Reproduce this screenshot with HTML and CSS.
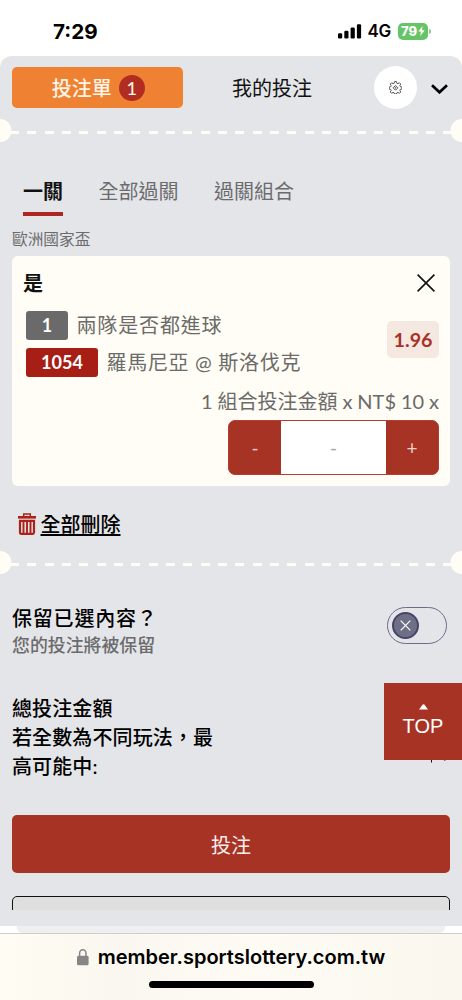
FILE: index.html
```html
<!DOCTYPE html>
<html lang="zh-Hant">
<head>
<meta charset="utf-8">
<meta name="viewport" content="width=device-width, initial-scale=1">
<title>投注單</title>
<link rel="stylesheet" href="styles.css">
</head>
<body>
<header class="status">
  <span class="clock">7:29</span>
  <div class="status-right">
    <svg class="signal" width="24" height="15" viewBox="0 0 24 15"><rect x="0" y="9.3" width="4.2" height="5.2" rx="1.2"/><rect x="6.3" y="6.8" width="4.2" height="7.7" rx="1.2"/><rect x="12.6" y="3.5" width="4.2" height="11" rx="1.2"/><rect x="18.9" y="0.3" width="4.2" height="14.2" rx="1.2"/></svg>
    <span class="network">4G</span>
    <div class="battery"><span>79</span><svg width="7" height="10" viewBox="0 0 7 10"><path d="M4.6 0 0.3 5.5h2.6L2.3 10 6.7 4.3H4z" fill="#fff"/></svg></div>
    <i class="battery-cap"></i>
  </div>
</header>
<div class="backdrop">
<main class="sheet">
  <nav class="top-nav">
    <button class="slip-tab">投注單<span class="count">1</span></button>
    <span class="my-bets">我的投注</span>
    <button class="gear"><svg width="13" height="13" viewBox="0 0 24 24" fill="none" stroke="#333" stroke-width="1.5" stroke-linejoin="round"><path d="M10.300 1h3.400l.8 3.200 2 .8 2.800-1.700 2.400 2.400L20 8.500l.8 2 3.200.8v3.400l-3.200.8-.8 2 1.700 2.800-2.400 2.400L16.500 21l-2 .8-.8 2.200h-3.400l-.8-2.200-2-.8-2.800 1.700-2.400-2.400L4 17.500l-.8-2L0 14.700v-3.400l3.200-.8.8-2-1.700-2.800 2.400-2.400L7.500 5l2-.8z"/><path d="M12 8.300 16.500 12.500 12 17 7.500 12.500z"/><circle cx="12" cy="12.600" r=".8"/></svg></button>
    <svg class="chevron" width="17" height="10" viewBox="0 0 17 10"><path d="M1 1.300 8.500 8.300 16 1.300" fill="none" stroke="#000" stroke-width="2.700"/></svg>
  </nav>
  <div class="perforation"></div>
  <nav class="modes">
    <span class="mode active">一關</span>
    <span class="mode">全部過關</span>
    <span class="mode">過關組合</span>
  </nav>
  <p class="league">歐洲國家盃</p>
  <section class="card">
    <div class="card-head">
      <strong>是</strong>
      <svg width="18" height="18" viewBox="0 0 18 18"><path d="M.6.6 17.400 17.400M17.400.6.6 17.400" stroke="#111" stroke-width="1.600"/></svg>
    </div>
    <div class="pick">
      <div class="pick-info">
        <div class="row"><span class="tag grey">1</span><span>兩隊是否都進球</span></div>
        <div class="row"><span class="tag red">1054</span><span class="match">羅馬尼亞 @ 斯洛伐克</span></div>
      </div>
      <span class="odds">1.96</span>
    </div>
    <p class="stake">1 組合投注金額 x NT$ 10 x</p>
    <div class="stepper"><button>-</button><span class="amount">-</span><button>+</button></div>
  </section>
  <div class="delete">
    <svg width="18" height="22" viewBox="0 0 18 22"><g fill="none" stroke="#ae2118"><path d="M5.700 3.500V.9h6.600v2.600" stroke-width="1.500"/><path d="M0 4.300h18" stroke-width="2.600"/><path d="M2 7.800h14v11.700q0 1.300-1.300 1.300H3.300Q2 20.800 2 19.500z" stroke-width="2.200"/><path d="M5.500 8v12M9 8v12M12.500 8v12" stroke-width="1.900"/></g></svg>
    <a>全部刪除</a>
  </div>
  <div class="perforation"></div>
  <section class="keep">
    <div><h2>保留已選內容？</h2><p>您的投注將被保留</p></div>
    <div class="switch"><span class="knob"><svg width="11" height="11" viewBox="0 0 11 11"><path d="M.7.7 10.300 10.300M10.300.7.7 10.300" stroke="#fff" stroke-width="1.200"/></svg></span></div>
  </section>
  <section class="totals">
    <p>總投注金額</p>
    <div class="win"><p>若全數為不同玩法，最高可能中:</p><svg class="value-edge" width="20" height="3" viewBox="0 0 20 3"><path d="M1 0h1v2.500H1z" fill="#111"/><path d="M14 0h1.500v1H14z" fill="#111" opacity=".5"/></svg></div>
  </section>
  <button class="submit">投注</button>
  <div class="next-clip"><div class="next-button"></div></div>
</main>
</div>
<div class="tail"><div class="tail-bar"></div></div>
<footer class="browser-bar">
  <div class="address"><svg width="12" height="17" viewBox="0 0 12 17"><rect x="0" y="6.800" width="11.600" height="9.500" rx="1.500" fill="#868686"/><path d="M2.600 7.500V4.300a3.200 3.500 0 0 1 6.400 0v3.200" fill="none" stroke="#868686" stroke-width="1.500"/></svg><span>member.sportslottery.com.tw</span></div>
  <div class="home"></div>
</footer>
<a class="to-top"><svg width="9" height="6" viewBox="0 0 9 6"><path d="M0 5.500 3.700.6q.8-.9 1.600 0L9 5.500z" fill="#fff"/></svg><span>TOP</span></a>
</body>
</html>
```
FILE: styles.css
```css
* { box-sizing: border-box; }
body {
  margin: 0;
  width: 462px;
  height: 1000px;
  overflow: hidden;
  position: relative;
  background: #fff;
  color: #111;
  font-family: Lato, "Noto Sans CJK TC", sans-serif;
  font-size: 20px;
}
p, h2 { margin: 0; font-weight: 400; }
button { border: 0; padding: 0; font: inherit; display: flex; align-items: center; justify-content: center; }
svg { display: block; flex: none; }

.status { height: 56px; padding: 6px 31px 0 53px; display: flex; align-items: center; justify-content: space-between; font-family: Inter, sans-serif; color: #000; }
.clock { font-size: 20.700px; font-weight: 700; }
.status-right { display: flex; align-items: center; }
.network { font-size: 17px; font-weight: 600; margin: 0 7px 0 6px; letter-spacing: -.3px; }
.battery { width: 30px; height: 17px; border-radius: 5px; background: #65c466; color: #fff; font-size: 13px; font-weight: 800; display: flex; align-items: center; justify-content: center; gap: 1px; }
.battery-cap { width: 2px; height: 5px; margin-left: 1px; border-radius: 0 2px 2px 0; background: #8fd18f; }

.backdrop { background: #fffdf5; }
.sheet { height: 870px; border-radius: 12px 12px 0 0; background: #e4e5e8; overflow: hidden; }
.top-nav { display: flex; align-items: center; height: 64px; padding: 0 14px 1px 12px; }
.slip-tab { width: 170.500px; height: 41px; border-radius: 5px; background: #ef8132; color: #fff5e6; gap: 7px; padding-left: 2px; font-weight: 500; }
.count { width: 26px; height: 26px; border-radius: 50%; background: #b22d21; font-size: 18px; line-height: 26px; text-align: center; }
.my-bets { margin-left: 49.500px; }
.gear { width: 43px; height: 43px; margin-left: 62px; border-radius: 50%; background: #fff; }
.chevron { margin-left: 14px; margin-top: 2px; }

.perforation {
  height: 23px;
  background:
    radial-gradient(circle at 0 50%, #fffdf5 11px, transparent 12px) left / 12px 100% no-repeat,
    radial-gradient(circle at 100% 50%, #fffdf5 11px, transparent 12px) right / 12px 100% no-repeat,
    repeating-linear-gradient(90deg, #fffdf5 0 9px, transparent 9px 17.34px) 10px 12px / 442px 3px no-repeat;
}
.top-nav + .perforation { margin-top: -1px; }

.modes { display: flex; gap: 35.500px; height: 74px; padding: 0 23px; align-items: flex-end; color: #6b6b6d; }
.mode { height: 41px; line-height: 33px; }
.mode.active { border-bottom: 4px solid #ae2620; color: #111; font-weight: 700; }
.league { height: 40px; padding: 8px 12px 0; font-size: 15.700px; line-height: 30px; color: #6b6b6d; }

.card { height: 230px; margin: 0 12px; padding: 18px 11px 0 14px; border-radius: 6px; background: #fffdf5; color: #6b6b69; display: flex; flex-direction: column; }
.card-head { display: flex; justify-content: space-between; align-items: center; height: 18px; padding-right: 4px; margin-left: -3px; color: #111; font-size: 20px; line-height: 18px; }
.pick { display: flex; justify-content: space-between; align-items: flex-start; margin-top: 19px; height: 70px; }
.pick-info { display: flex; flex-direction: column; gap: 8px; }
.row { display: flex; align-items: center; gap: 8.500px; height: 29px; letter-spacing: .85px; line-height: 29px; }
.match { letter-spacing: .7px; }
.tag { height: 29px; border-radius: 3px; color: #fff; text-align: center; font-size: 18px; font-weight: 700; letter-spacing: 0; }
.grey { width: 42px; background: #6a6a6a; }
.red { width: 72px; background: #a61e14; }
.odds { width: 52px; height: 37px; margin-top: 10px; border-radius: 5px; background: #f5e8e1; color: #a93226; font-size: 19.700px; line-height: 37px; font-weight: 700; text-align: center; }
.stake { height: 39px; line-height: 40px; text-align: right; font-size: 20px; word-spacing: -.2px; white-space: nowrap; }
.stepper { align-self: flex-end; width: 211px; height: 55px; border: 1px solid #b53d31; border-radius: 7px; background: #a73325; display: flex; overflow: hidden; }
.stepper button { width: 52px; background: #a73325; color: #edcfc8; font-size: 19px; }
.amount { flex: 1; background: #fff; color: #a8a8a8; line-height: 53px; text-align: center; }

.delete { display: flex; gap: 5px; height: 65px; padding: 10px 17.500px 0; align-items: center; color: #000; font-weight: 500; }
.delete a { text-decoration: underline; text-decoration-thickness: 1.500px; text-underline-offset: 2px; }
.keep { display: flex; justify-content: space-between; padding: 32px 15px 0 12px; height: 120px; }
.keep h2 { font-size: 20px; letter-spacing: .8px; font-weight: 500; line-height: 24px; color: #000; }
.keep p { font-size: 17.900px; line-height: 30px; color: #6b6b6d; font-weight: 500; }
.switch { width: 60px; height: 37px; margin-top: 1px; border: 1.500px solid #70698c; border-radius: 19px; padding: 4px; }
.knob { display: flex; align-items: center; justify-content: center; width: 27px; height: 27px; border: 2px solid #49436a; border-radius: 50%; background: #6d6f87; }
.totals { height: 121px; padding: 0 12px; line-height: 29px; letter-spacing: .12px; color: #000; }
.totals p { font-weight: 500; }
.win { display: flex; justify-content: space-between; }
.win p { width: 210px; }
.value-edge { margin-top: 37px; }
.submit { width: 438px; height: 58px; margin: 0 12px; border-radius: 5px; background: #a73325; color: #fbeeee; }
.next-clip { height: 37px; padding: 23px 12px 0; overflow: hidden; }
.next-button { height: 50px; border: 1.500px solid #111; border-radius: 5px; background: #dfdfdf; }

.tail { height: 7px; background: #fff; padding: 0 17px; }
.tail-bar { height: 7px; background: #efeff0; border-radius: 0 0 5px 5px; }
.browser-bar { height: 67px; border-top: 1px solid #cfcfcd; background: linear-gradient(90deg, #fffcf3, #f9f7ef 25%, #fdfbf4 55%, #faf7ee); color: #000; display: flex; flex-direction: column; align-items: center; }
.address { display: flex; align-items: center; gap: 9px; height: 47px; font: 600 20px/47px Inter, sans-serif; }
.home { width: 165px; height: 7px; border-radius: 4px; background: #000; }
.to-top { position: absolute; right: 0; top: 683px; width: 78px; height: 77px; background: #a73325; color: #fff; display: flex; flex-direction: column; align-items: center; padding-top: 21px; font: 20px/24px "Liberation Sans", sans-serif; }
.to-top span { margin-top: 4px; }
```
